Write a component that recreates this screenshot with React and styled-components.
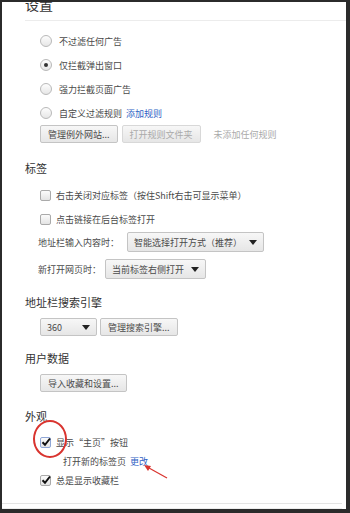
import styled, { createGlobalStyle } from 'styled-components';

const GlobalStyle = createGlobalStyle`
  html, body {
    margin: 0;
    padding: 0;
    background: #fff;
  }
  body {
    font-family: "Noto Sans CJK SC", "Noto Sans", sans-serif;
    color: #4a4a4a;
  }
`;

const Frame = styled.div`
  width: 350px;
  height: 513px;
  box-sizing: border-box;
  border-top: 2px solid #2b2b2b;
  border-left: 2px solid #2b2b2b;
  border-right: 4px solid #2b2b2b;
  border-bottom: 4px solid #2b2b2b;
  background: #fff;
  overflow: hidden;
  display: flex;
  flex-direction: column;
`;

const Page = styled.div`
  padding-left: 23px;
  flex: 1;
`;

const Title = styled.h1`
  margin: -5px 0 0 0;
  padding-bottom: 8px;
  font-size: 14px;
  line-height: 15px;
  font-weight: normal;
  color: #333;
  border-bottom: 1px solid #ececec;
`;

const Heading = styled.h2`
  margin: ${p => p.$top || 16}px 0 0 0;
  font-size: 11px;
  line-height: 16px;
  font-weight: normal;
  color: #333;
`;

const Section = styled.div`
  position: relative;
  padding-left: 15px;
  margin-top: ${p => p.$top || 0}px;
`;

const Row = styled.div`
  display: flex;
  align-items: center;
  height: ${p => p.$h || 24}px;
  margin-top: ${p => p.$top || 0}px;
  padding-left: ${p => p.$indent || 0}px;
  font-size: 9px;
  white-space: nowrap;
  gap: ${p => p.$gap || 0}px;
`;

const Radio = styled.span`
  width: 10px;
  height: 10px;
  border-radius: 50%;
  border: 1px solid #b9b9b9;
  background: linear-gradient(#fdfdfd, #e6e6e6);
  margin-right: 7px;
  display: flex;
  align-items: center;
  justify-content: center;
  flex-shrink: 0;
  &::after {
    content: '';
    width: 4px;
    height: 4px;
    border-radius: 50%;
    background: ${p => (p.$on ? '#333' : 'transparent')};
  }
`;

const Check = styled.span`
  width: 9px;
  height: 9px;
  border: 1px solid ${p => (p.$focus ? '#8fa6d6' : '#aaa')};
  border-radius: 2px;
  background: linear-gradient(#fbfbfb, #e4e4e4);
  margin-right: 5px;
  position: relative;
  flex-shrink: 0;
`;

const Tick = styled.svg`
  position: absolute;
  left: -1px;
  top: -2px;
`;

const Link = styled.span`
  color: #2f5fc4;
  margin-left: 4px;
`;

const Muted = styled.span`
  color: #aaa;
  margin-left: 9px;
`;

const Button = styled.span`
  display: inline-flex;
  align-items: center;
  height: 18px;
  box-sizing: border-box;
  padding: 0 7px;
  border: 1px solid ${p => (p.$disabled ? '#d8d8d8' : '#c4c4c4')};
  border-radius: 2px;
  background: linear-gradient(#f7f7f7, #e6e6e6);
  color: ${p => (p.$disabled ? '#aaa' : '#4a4a4a')};
  font-size: 9px;
`;

const Select = styled.span`
  display: inline-flex;
  align-items: center;
  justify-content: space-between;
  height: ${p => p.$h || 20}px;
  width: ${p => p.$w}px;
  box-sizing: border-box;
  padding: 0 6px;
  border: 1px solid #c4c4c4;
  border-radius: 2px;
  background: linear-gradient(#f7f7f7, #e6e6e6);
  font-size: 9px;
  &::after {
    content: '';
    border-left: 4px solid transparent;
    border-right: 4px solid transparent;
    border-top: 5px solid #222;
  }
`;

const Label = styled.span`
  margin-left: -2px;
  margin-right: ${p => p.$gap || 3}px;
`;

const Circle = styled.div`
  position: absolute;
  left: 8px;
  top: -12px;
  width: 34px;
  height: 38px;
  box-sizing: border-box;
  border: 2px solid #d9342f;
  border-radius: 50%;
  pointer-events: none;
`;

const Arrow = styled.svg`
  position: absolute;
  left: 115px;
  top: 30px;
`;

const Footer = styled.div`
  height: 4px;
  border-top: 1px solid #e4e4e4;
  border-bottom: 1px solid #ededed;
  margin-right: 4px;
`;

const TickMark = () => (
  <Tick width="12" height="12" viewBox="0 0 12 12">
    <path d="M2.5 6.2 L5 8.8 L10 2.5" fill="none" stroke="#111" strokeWidth="2" />
  </Tick>
);

function App() {
  return (
    <>
      <GlobalStyle />
      <Frame>
        <Page>
          <Title>设置</Title>
          <Section $top={8}>
            <Row><Radio />不过滤任何广告</Row>
            <Row><Radio $on />仅拦截弹出窗口</Row>
            <Row><Radio />强力拦截页面广告</Row>
            <Row><Radio />自定义过滤规则<Link>添加规则</Link></Row>
            <Row $h={18} $gap={4}>
              <Button>管理例外网站...</Button>
              <Button $disabled>打开规则文件夹</Button>
              <Muted>未添加任何规则</Muted>
            </Row>
          </Section>

          <Heading $top={17}>标签</Heading>
          <Section $top={7}>
            <Row><Check />右击关闭对应标签（按住Shift右击可显示菜单）</Row>
            <Row><Check />点击链接在后台标签打开</Row>
            <Row $h={20} $top={1}>
              <Label $gap={8}>地址栏输入内容时：</Label>
              <Select $w={137}>智能选择打开方式（推荐）</Select>
            </Row>
            <Row $h={20} $top={7}>
              <Label $gap={4}>新打开网页时：</Label>
              <Select $w={101}>当前标签右侧打开</Select>
            </Row>
          </Section>

          <Heading $top={15}>地址栏搜索引擎</Heading>
          <Section $top={8}>
            <Row $h={18} $gap={3}>
              <Select $w={57} $h={18}>360</Select>
              <Button>管理搜索引擎...</Button>
            </Row>
          </Section>

          <Heading $top={14}>用户数据</Heading>
          <Section $top={8}>
            <Row $h={18}>
              <Button>导入收藏和设置...</Button>
            </Row>
          </Section>

          <Heading $top={16}>外观</Heading>
          <Section $top={8}>
            <Row $h={20}>
              <Check $focus><TickMark /></Check>显示“主页”按钮
            </Row>
            <Row $h={18} $indent={23}>
              打开新的标签页<Link>更改</Link>
            </Row>
            <Row $h={20}>
              <Check><TickMark /></Check>总是显示收藏栏
            </Row>
            <Circle />
            <Arrow width="32" height="20" viewBox="0 0 32 20">
              <line x1="27" y1="16" x2="9" y2="6" stroke="#d9342f" strokeWidth="1.2" />
              <path d="M4 3 L11 4 L8 9 Z" fill="#d9342f" />
            </Arrow>
          </Section>
        </Page>
        <Footer />
      </Frame>
    </>
  );
}

export default App;
